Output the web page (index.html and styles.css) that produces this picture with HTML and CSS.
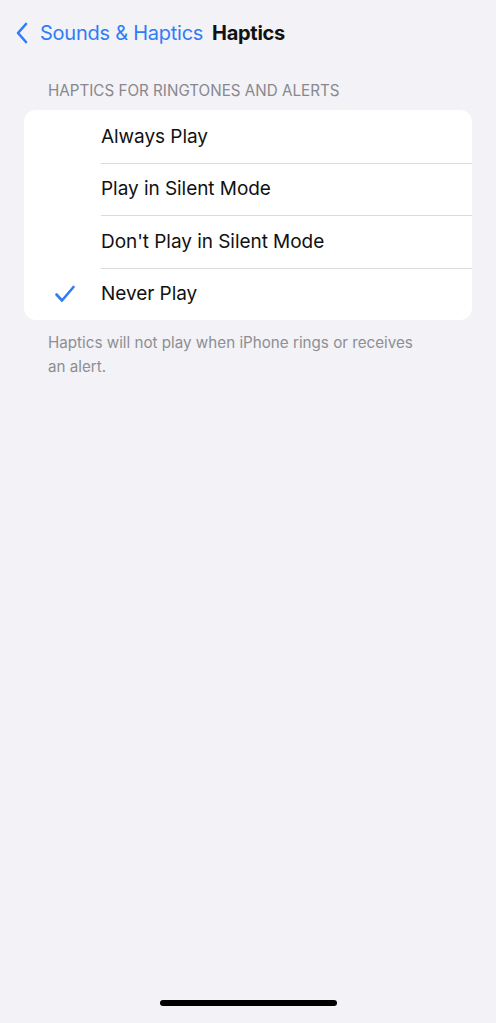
FILE: index.html
```html
<!DOCTYPE html>
<html>
<head>
<meta charset="utf-8">
<link rel="stylesheet" href="styles.css">
</head>
<body>
<div class="screen">
  <header class="nav">
    <a class="back">
      <svg class="chev" width="14" height="22" viewBox="0 0 14 22"><path d="M11 2 L3 11 L11 20" fill="none" stroke="#2f7cf6" stroke-width="2.6" stroke-linecap="round" stroke-linejoin="round"/></svg>
      <span class="back-label">Sounds &amp; Haptics</span>
    </a>
    <span class="title">Haptics</span>
  </header>
  <section class="group">
    <div class="group-header">HAPTICS FOR RINGTONES AND ALERTS</div>
    <div class="card">
      <div class="row"><span class="check"></span><span class="label">Always Play</span></div>
      <div class="row"><span class="check"></span><span class="label">Play in Silent Mode</span></div>
      <div class="row"><span class="check"></span><span class="label">Don't Play in Silent Mode</span></div>
      <div class="row"><span class="check"><svg width="22" height="18" viewBox="0 0 22 18"><path d="M2.5 9.5 L8 15.5 L19.5 2" fill="none" stroke="#2f7cf6" stroke-width="2.6" stroke-linecap="round" stroke-linejoin="round"/></svg></span><span class="label">Never Play</span></div>
    </div>
    <div class="group-footer">Haptics will not play when iPhone rings or receives an alert.</div>
  </section>
  <div class="spacer"></div>
  <div class="home"><div class="home-bar"></div></div>
</div>
</body>
</html>
```
FILE: styles.css
```css
html, body {
  margin: 0;
  padding: 0;
  background: #f2f2f7;
}
body {
  font-family: Inter, "Noto Sans", sans-serif;
  -webkit-font-smoothing: antialiased;
}
.screen {
  width: 496px;
  height: 1023px;
  display: flex;
  flex-direction: column;
}
.nav {
  display: flex;
  align-items: center;
  height: 68px;
  padding-left: 15px;
  box-sizing: border-box;
  padding-bottom: 2px;
}
.back {
  display: flex;
  align-items: center;
  color: #2f7cf6;
}
.chev {
  display: block;
}
.back-label {
  margin-left: 11px;
  font-size: 20px;
  letter-spacing: -0.25px;
}
.title {
  margin-left: 9px;
  font-size: 20px;
  font-weight: 700;
  color: #111;
  letter-spacing: -0.3px;
}
.group {
  padding: 0 24px;
}
.group-header {
  padding-left: 24px;
  padding-top: 13px;
  box-sizing: border-box;
  font-size: 15.2px;
  color: #88888d;
  height: 42px;
  line-height: 20px;
}
.card {
  background: #fff;
  border-radius: 12px;
  overflow: hidden;
}
.row {
  display: flex;
  align-items: center;
  height: 52.5px;
  position: relative;
}
.row + .row::before {
  content: "";
  position: absolute;
  top: 0;
  left: 77px;
  right: 0;
  height: 1px;
  background: #dcdce0;
}
.check {
  width: 77px;
  display: flex;
  align-items: center;
  padding-left: 30px;
  box-sizing: border-box;
}
.check svg { display: block; }
.label {
  font-size: 19px;
  color: #111;
  letter-spacing: -0.05px;
}
.group-footer {
  padding: 11px 40px 0 24px;
  font-size: 15.2px;
  line-height: 24px;
  color: #8e8e93;
}
.spacer { flex: 1; }
.home {
  height: 23px;
  display: flex;
  justify-content: center;
}
.home-bar {
  width: 177px;
  height: 6px;
  border-radius: 3px;
  background: #000;
}
```
